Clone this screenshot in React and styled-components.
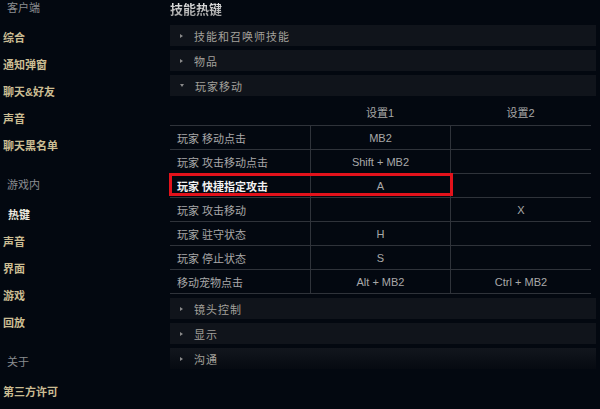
import React from 'react';
import styled, { createGlobalStyle } from 'styled-components';

const GlobalStyle = createGlobalStyle`
  html, body {
    margin: 0;
    padding: 0;
    background: #030810;
  }
  body {
    font-family: "Liberation Sans", "Noto Sans CJK SC", sans-serif;
  }
`;

const Page = styled.div`
  display: flex;
  width: 600px;
  height: 409px;
  overflow: hidden;
  background: #030810;
`;

const Sidebar = styled.nav`
  width: 170px;
  flex-shrink: 0;
  display: flex;
  flex-direction: column;
`;

const Group = styled.div`
  display: flex;
  flex-direction: column;
  margin-bottom: 17px;
`;

const GroupTitle = styled.div`
  height: 16px;
  line-height: 16px;
  padding-left: 7px;
  margin-bottom: 9px;
  font-size: 11px;
  color: #8b8d90;
`;

const NavItem = styled.div`
  height: 27px;
  line-height: 27px;
  padding-left: ${p => (p.active ? '8px' : '3px')};
  font-size: 11px;
  font-weight: bold;
  color: ${p => (p.active ? '#ece8df' : '#cbbd93')};
`;

const Main = styled.main`
  flex: 1;
  display: flex;
  flex-direction: column;
  padding-right: 4px;
`;

const Title = styled.h2`
  margin: 0 0 5px;
  height: 20px;
  line-height: 20px;
  font-size: 13px;
  font-weight: bold;
  background: linear-gradient(#f2f2f2, #8e8e8e);
  -webkit-background-clip: text;
  background-clip: text;
  color: transparent;
  width: max-content;
`;

const Bar = styled.div`
  height: 21px;
  margin-bottom: 4px;
  display: flex;
  align-items: center;
  padding-left: 10px;
  gap: 11px;
  background: ${p => (p.fade ? 'linear-gradient(#12161d, #060a11)' : '#10141b')};
  font-size: 11px;
  letter-spacing: 1px;
  color: #a3a19b;
`;

const Arrow = styled.span`
  width: 0;
  height: 0;
  border-style: solid;
  ${p =>
    p.open
      ? 'border-width: 3px 2.5px 0 2.5px; border-color: #8a8a8a transparent transparent transparent;'
      : 'border-width: 2.5px 0 2.5px 3px; border-color: transparent transparent transparent #8a8a8a;'}
`;

const Table = styled.div`
  margin-top: -4px;
  margin-right: 5px;
  margin-bottom: 4px;
  display: flex;
  flex-direction: column;
  border-bottom: 1px solid #2f333a;
`;

const HeadRow = styled.div`
  display: grid;
  grid-template-columns: 140px 140px 1fr;
  height: 29px;
  align-items: center;
  font-size: 11px;
  color: #a7a7a7;
`;

const HeadCell = styled.div`
  text-align: center;
  padding-top: 3px;
`;

const Row = styled.div`
  position: relative;
  display: grid;
  grid-template-columns: 140px 140px 1fr;
  height: 24px;
  border-top: 1px solid #2f333a;
  box-sizing: border-box;
  font-size: 11px;
  color: #a9a9a9;

  ${p =>
    p.highlight &&
    `&::after {
      content: '';
      position: absolute;
      left: -1px;
      top: -1px;
      width: 284px;
      height: 23px;
      border: 3px solid #e3121b;
      box-sizing: border-box;
      pointer-events: none;
    }`}
`;

const Cell = styled.div`
  display: flex;
  align-items: center;
  justify-content: ${p => (p.label ? 'flex-start' : 'center')};
  padding-left: ${p => (p.label ? '7px' : '0')};
  border-left: ${p => (p.label ? 'none' : '1px solid #2f333a')};
  color: ${p => (p.strong ? '#f2f2f2' : 'inherit')};
  font-weight: ${p => (p.strong ? 'bold' : 'normal')};
`;

const sidebar = [
  { title: '客户端', items: ['综合', '通知弹窗', '聊天&好友', '声音', '聊天黑名单'] },
  { title: '游戏内', items: ['热键', '声音', '界面', '游戏', '回放'], active: '热键' },
  { title: '关于', items: ['第三方许可'] },
];

const rows = [
  ['玩家 移动点击', 'MB2', ''],
  ['玩家 攻击移动点击', 'Shift + MB2', ''],
  ['玩家 快捷指定攻击', 'A', '', true],
  ['玩家 攻击移动', '', 'X'],
  ['玩家 驻守状态', 'H', ''],
  ['玩家 停止状态', 'S', ''],
  ['移动宠物点击', 'Alt + MB2', 'Ctrl + MB2'],
];

export default function App() {
  return (
    <>
      <GlobalStyle />
      <Page>
        <Sidebar>
          {sidebar.map(g => (
            <Group key={g.title}>
              <GroupTitle>{g.title}</GroupTitle>
              {g.items.map(item => (
                <NavItem key={item} active={item === g.active}>
                  {item}
                </NavItem>
              ))}
            </Group>
          ))}
        </Sidebar>
        <Main>
          <Title>技能热键</Title>
          <Bar><Arrow />技能和召唤师技能</Bar>
          <Bar><Arrow />物品</Bar>
          <Bar><Arrow open />玩家移动</Bar>
          <Table>
            <HeadRow>
              <div />
              <HeadCell>设置1</HeadCell>
              <HeadCell>设置2</HeadCell>
            </HeadRow>
            {rows.map(([label, a, b, hl]) => (
              <Row key={label} highlight={hl}>
                <Cell label strong={hl}>{label}</Cell>
                <Cell>{a}</Cell>
                <Cell>{b}</Cell>
              </Row>
            ))}
          </Table>
          <Bar><Arrow />镜头控制</Bar>
          <Bar><Arrow />显示</Bar>
          <Bar fade><Arrow />沟通</Bar>
        </Main>
      </Page>
    </>
  );
}
